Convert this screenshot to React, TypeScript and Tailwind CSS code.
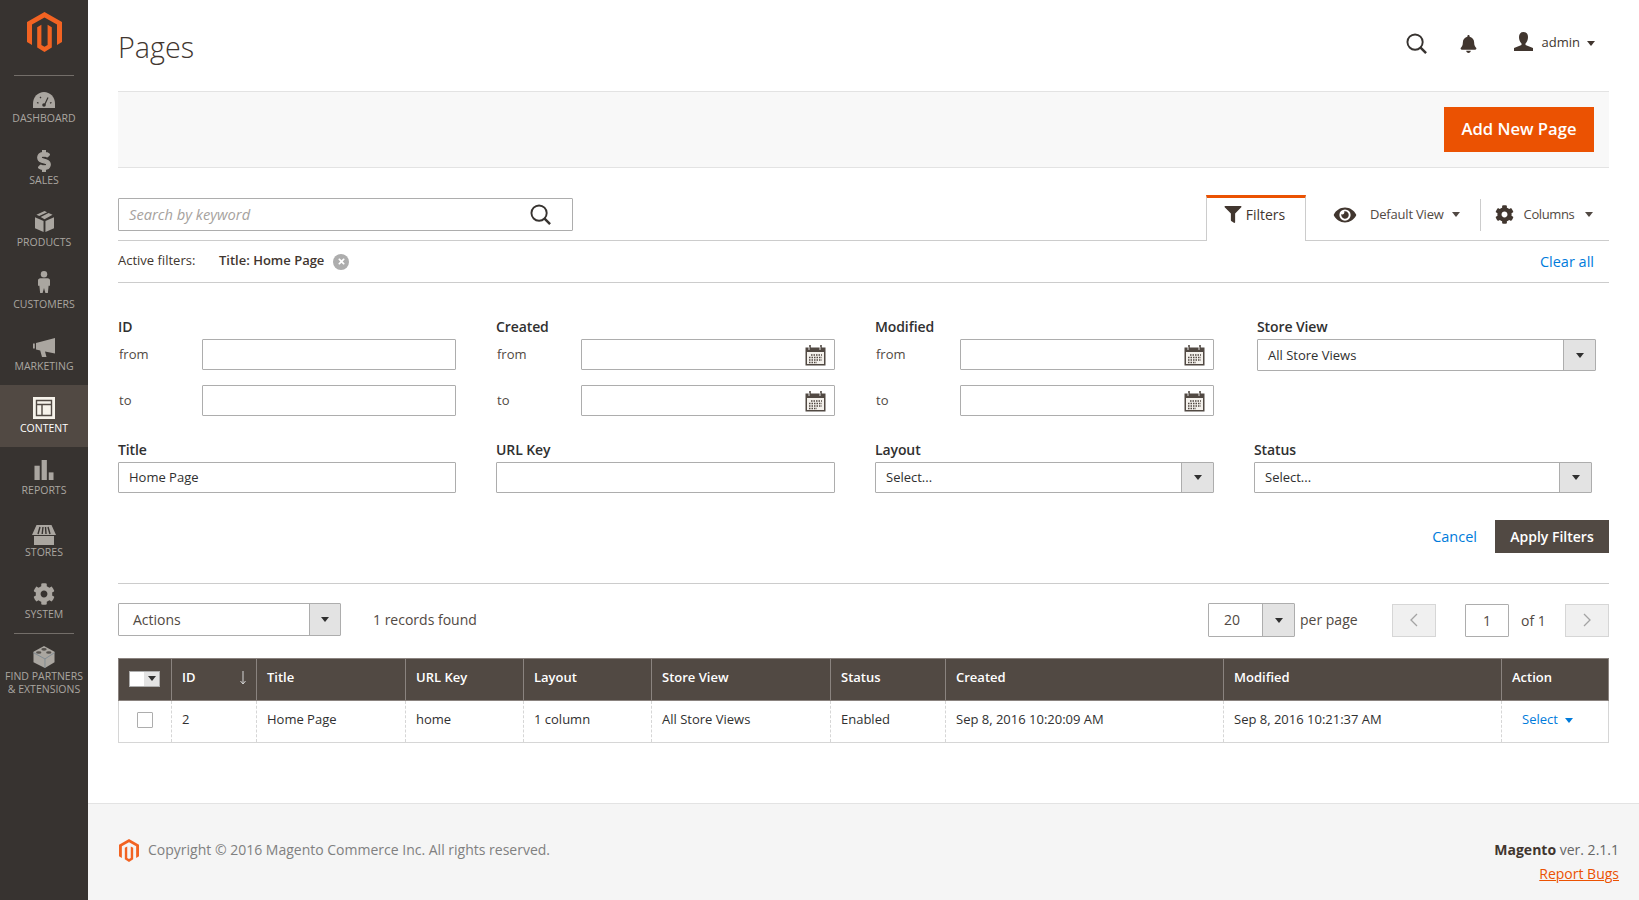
import { FaBell, FaCog, FaDollarSign, FaEye, FaFilter, FaTimes } from "react-icons/fa";
import type { ReactNode } from "react";

const font = { fontFamily: '"Open Sans", sans-serif' };

const MagentoLogo = ({ className }: { className: string }) => (
  <svg viewBox="0 0 35 40" className={className} fill="#f26322">
    <path d="M17.5 0 35 10v20l-5 3V12.6L17.5 5.5 5 12.6V33l-5-3V10Z" />
    <path d="M10.2 15.2 14.4 12.8V33l3.1 1.8L20.6 33V12.8l4.2 2.4v20.2L17.5 40l-7.3-4.6Z" />
  </svg>
);

const Caret = ({ className = "border-t-[#303030]" }: { className?: string }) => (
  <span className={`inline-block w-0 h-0 border-x-[4px] border-x-transparent border-t-[5px] ${className}`} />
);

const Lens = ({ className }: { className: string }) => (
  <svg viewBox="0 0 22 22" className={className} fill="none" stroke="#373330" strokeWidth="2">
    <circle cx="9.5" cy="9.5" r="8" />
    <path d="m15 15 6 6" strokeWidth="2.6" />
  </svg>
);

const CalendarIcon = () => (
  <svg viewBox="0 0 21 21" className="w-[21px] h-[21px] absolute right-[8px] top-[5px]">
    <rect x="0.5" y="2.5" width="20" height="18" fill="#514943" />
    <rect x="2" y="7" width="17" height="12" fill="#f4f1ec" />
    <path d="M5 0v5M16 0v5" stroke="#514943" strokeWidth="1.6" />
    <path d="M4 2v3M15 2v3" stroke="#fff" strokeWidth="0.8" />
    <path d="M6 10h11M4 12.5h13M4 15h13M4 17.5h8" stroke="#514943" strokeWidth="1.5" strokeDasharray="1.5 1" />
  </svg>
);

const navIcons: Record<string, ReactNode> = {
  DASHBOARD: (
    <svg viewBox="0 0 22 16" className="w-[22px] h-[16px] translate-y-[1px] fill-[#aaa6a0]">
      <path d="M0 16v-4.500C0 5 5 0 11 0s11 5 11 11.500V16Z" />
      <path d="M11.500 13 15 5.500M4 10.500l1.500.6M7 5l1 1.200M18.500 10.500l-1.500.6" stroke="#373330" strokeWidth="1.200" />
      <circle cx="11" cy="13" r="1.800" fill="#373330" />
    </svg>
  ),
  SALES: <FaDollarSign stroke="currentColor" strokeWidth={30} className="w-[14px] h-[22px] text-[#aaa6a0]" />,
  PRODUCTS: (
    <svg viewBox="0 0 20 22" className="w-[19px] h-[21px] -translate-y-[1px] fill-[#aaa6a0]">
      <path d="M0 6.500 9 10.500V22L0 18Z" />
      <path d="M20 6.500 11 10.500V22L20 18Z" />
      <path d="M10 0 12.800 1.300 4.500 5.300 1.500 4ZM14.300 2 18.500 4 10 8.500 6 6.200Z" />
    </svg>
  ),
  CUSTOMERS: (
    <svg viewBox="0 0 13 24" className="w-[12px] h-[24px] -translate-y-[3px] fill-[#aaa6a0]">
      <circle cx="6.500" cy="3.500" r="3.500" />
      <path d="M2.500 8h8c1.500 0 2.500 1 2.500 2.500V16h-1.500l-.8 8H8l-1.500-5.500L5 24H2.300l-.8-8H0v-5.500C0 9 1 8 2.500 8Z" />
    </svg>
  ),
  MARKETING: (
    <svg viewBox="0 0 22 19" className="w-[22px] h-[19px] translate-y-[1px] fill-[#aaa6a0]">
      <path d="M0 5.500h1.800v5H0ZM3 5 22 0v15.500L12 13.500 13.500 19H9L7.200 12.500 3 11.500Z" />
    </svg>
  ),
  CONTENT: (
    <svg viewBox="0 0 22 22" className="w-[22px] h-[22px] -translate-y-[1px]">
      <rect x="0" y="0" width="22" height="22" fill="#f7f3eb" />
      <path d="M3.500 3.500h15v15h-15ZM3.500 7.500h15M9 7.500v11" fill="none" stroke="#514943" strokeWidth="1.400" />
    </svg>
  ),
  REPORTS: (
    <svg viewBox="0 0 20 21" className="w-[20px] h-[20px] -translate-y-[1px] fill-[#aaa6a0]">
      <rect x="0" y="6" width="5.500" height="15" />
      <rect x="7.500" y="0" width="5.500" height="21" />
      <rect x="15" y="13" width="5" height="8" />
    </svg>
  ),
  STORES: (
    <svg viewBox="0 0 24 20" className="w-[24px] h-[20px] translate-y-[2px] fill-[#aaa6a0]">
      <path d="M4.500 0h15L24 10H0ZM2 11h20v9H2Z" />
      <path d="M8 2 6 9M11 2l-.8 7M13.500 2l.5 7M16 2l2 7" stroke="#373330" strokeWidth="1.400" />
    </svg>
  ),
  SYSTEM: <FaCog className="w-[22px] h-[22px] -translate-y-[1px] text-[#aaa6a0]" />,
  LEGO: (
    <svg viewBox="0 0 22 23" className="w-[22px] h-[22px] -translate-y-[1px] fill-[#aaa6a0]">
      <path d="M11 0 22 6v11l-10 6L0 17V6Z" />
      <path d="M0 7 12 13.500 22 7M12 13.500V23" fill="none" stroke="#7f8b93" strokeWidth="1" />
      <ellipse cx="11" cy="3.500" rx="2.800" ry="1.400" fill="#55514d" />
      <ellipse cx="5.500" cy="6.800" rx="2.800" ry="1.400" fill="#55514d" />
      <ellipse cx="16" cy="6.800" rx="2.800" ry="1.400" fill="#55514d" />
    </svg>
  ),
};

const navItems = ["DASHBOARD", "SALES", "PRODUCTS", "CUSTOMERS", "MARKETING", "CONTENT", "REPORTS", "STORES", "SYSTEM"];

const Sidebar = () => (
  <aside className="w-[88px] shrink-0 bg-[#373330]">
    <div className="h-[75px] pt-[12px] flex justify-center">
      <MagentoLogo className="w-[35px] h-[40px]" />
    </div>
    <div className="mx-[14px] h-px bg-[#736e69] -mb-px" />
    {navItems.map((item) => (
      <div
        key={item}
        className={`h-[62px] pt-[11px] flex flex-col items-center text-[10.5px] leading-[14px] ${
          item === "CONTENT" ? "bg-[#514943] text-white" : "text-[#aaa6a0]"
        }`}
      >
        <div className="h-[25px] flex items-center justify-center">{navIcons[item]}</div>
        <span>{item}</span>
      </div>
    ))}
    <div className="mx-[14px] h-px bg-[#736e69]" />
    <div className="pt-[12px] flex flex-col items-center text-[10.5px] leading-[13px] text-[#aaa6a0] text-center">
      <div className="h-[24px] flex items-center justify-center">{navIcons.LEGO}</div>
      <span>
        FIND PARTNERS
        <br />& EXTENSIONS
      </span>
    </div>
  </aside>
);

const Input = ({ value, calendar, className = "" }: { value?: string; calendar?: boolean; className?: string }) => (
  <div
    className={`relative h-[31px] border border-[#adadad] rounded-[1px] bg-white px-[10px] text-[13px] leading-[29px] text-[#303030] ${className}`}
  >
    {value}
    {calendar && <CalendarIcon />}
  </div>
);

const Select = ({ value, className = "" }: { value: string; className?: string }) => (
  <div className={`flex border border-[#adadad] rounded-[1px] bg-white text-[13px] text-[#303030] ${className}`}>
    <span className="flex-1 pl-[10px]">{value}</span>
    <span className="w-[32px] bg-[#e3e3e3] border-l border-[#adadad] flex items-center justify-center">
      <Caret />
    </span>
  </div>
);

const FieldLabel = ({ children }: { children: ReactNode }) => (
  <div className="text-[14px] font-semibold leading-[20px] text-[#303030] h-[22px] tracking-[-0.1px]">{children}</div>
);

const RangeField = ({ label, calendar, labelClass = "w-[84px]" }: { label: string; calendar?: boolean; labelClass?: string }) => (
  <div>
    <FieldLabel>{label}</FieldLabel>
    <div className="flex flex-col gap-[15px] text-[13px] text-[#514943]">
      {["from", "to"].map((p) => (
        <div key={p} className="flex items-center h-[31px]">
          <span className={`${labelClass} pl-px`}>{p}</span>
          <Input calendar={calendar} className="w-[254px]" />
        </div>
      ))}
    </div>
  </div>
);

const columns = [
  { name: "ID", w: 85 },
  { name: "Title", w: 149 },
  { name: "URL Key", w: 118 },
  { name: "Layout", w: 128 },
  { name: "Store View", w: 179 },
  { name: "Status", w: 115 },
  { name: "Created", w: 278 },
  { name: "Modified", w: 278 },
  { name: "Action", w: 107 },
];
const row = ["2", "Home Page", "home", "1 column", "All Store Views", "Enabled", "Sep 8, 2016 10:20:09 AM", "Sep 8, 2016 10:21:37 AM"];

const PagesTable = () => (
  <table className="w-[1490px] table-fixed border-collapse text-[13px]">
    <colgroup>
      <col className="w-[53px]" />
      {columns.map((c) => (
        <col key={c.name} style={{ width: c.w }} />
      ))}
    </colgroup>
    <thead>
      <tr className="h-[42px] bg-[#514943] text-white text-left">
        <th className="border border-[#8a837f] px-0 pb-[2px]">
          <div className="flex w-[31px] h-[16px] ml-[10px] border border-[#adadad] bg-white">
            <span className="flex-1" />
            <span className="w-[15px] bg-[#e3e3e3] flex items-center justify-center">
              <Caret />
            </span>
          </div>
        </th>
        {columns.map((c) => (
          <th key={c.name} className="relative border border-[#8a837f] px-[10px] pb-[4px] font-semibold">
            {c.name}
            {c.name === "ID" && (
              <svg viewBox="0 0 8 14" className="absolute right-[9px] top-[12px] w-[8px] h-[14px]" fill="none" stroke="#d6d6d6" strokeWidth="1">
                <path d="M4 0v12.500M1.500 10 4 13l2.500-3" />
              </svg>
            )}
          </th>
        ))}
      </tr>
    </thead>
    <tbody>
      <tr className="h-[42px] text-[#303030]">
        <td className="border-y border-l border-[#d6d6d6] pb-[4px]">
          <div className="w-[16px] h-[16px] mx-auto border border-[#adadad] rounded-[1px]" />
        </td>
        {row.map((cell) => (
          <td
            key={cell}
            className="border-y border-[#d6d6d6] border-l border-l-[#d6d6d6] border-dashed [border-top-style:solid] [border-bottom-style:solid] px-[10px] pb-[3px]"
          >
            {cell}
          </td>
        ))}
        <td className="border border-[#d6d6d6] [border-left-style:dashed] pl-[20px] pb-[3px] text-[#007bdb]">
          Select
          <Caret className="border-t-[#007bdb] ml-[7px] align-middle" />
        </td>
      </tr>
    </tbody>
  </table>
);

const Pager = ({ d }: { d: string }) => (
  <div className="w-[44px] h-[33px] bg-[#f0f0f0] border border-[#d6d6d6] flex items-center justify-center">
    <svg viewBox="0 0 10 14" className="w-[10px] h-[14px]" fill="none" stroke="#a3a3a3" strokeWidth="1.300">
      <path d={d} />
    </svg>
  </div>
);

export default function App() {
  return (
    <div className="flex w-[1639px] min-h-[900px] bg-white text-[#303030]" style={font}>
      <Sidebar />
      <main className="flex-1 flex flex-col min-w-0">
        <div className="px-[30px]">
          {/* Header */}
          <header className="h-[91px] flex items-start justify-between">
            <h1 className="mt-[25px] text-[28.7px] font-light leading-[44px] text-[#41362f]">Pages</h1>
            <div className="flex items-center pt-[33px] pr-[14px]">
              <Lens className="w-[21px] h-[21px]" />
              <FaBell className="w-[17px] h-[18px] ml-[33px] text-[#41362f]" />
              <svg viewBox="0 0 19 19" className="w-[19px] h-[19px] ml-[37px] -mt-[4px] fill-[#41362f]">
                <path d="M9.500 0C6.500 0 5 2 5 5s1 5 2.500 6.500V13L0 16v3h19v-3l-7.500-3v-1.500C13 10 14 8 14 5s-1.500-5-4.500-5Z" />
              </svg>
              <span className="ml-[9px] -mt-[2px] text-[13px] text-[#41362f]">admin</span>
              <Caret className="border-t-[#41362f] ml-[7px]" />
            </div>
          </header>

          {/* Action bar */}
          <div className="h-[77px] border-y border-[#e3e3e3] bg-[#f8f8f8] flex items-center justify-end pr-[15px]">
            <button className="w-[150px] h-[45px] bg-[#eb5202] text-white text-[16.6px] font-semibold">Add New Page</button>
          </div>

          {/* Search and view toolbar */}
          <div className="mt-[27px] h-[46px] flex items-start border-b border-[#cccccc]">
            <div className="mt-[3px] w-[455px] h-[33px] border border-[#adadad] rounded-[1px] flex items-center justify-between pl-[10px] pr-[21px]">
              <span className="text-[14.7px] italic text-[#a6a29e]">Search by keyword</span>
              <Lens className="w-[21px] h-[21px]" />
            </div>
            <div className="ml-[633px] w-[100px] h-[46px] border-x border-[#cccccc] border-t-[3px] border-t-[#eb5202] bg-white flex items-center justify-center gap-[4px] text-[14px] text-[#41362f] pb-[11px] pr-[3px]">
              <FaFilter className="w-[18px] h-[17px] text-[#41362f]" />
              Filters
            </div>
            <div className="flex items-center h-[33px] mt-[3px] text-[13px] text-[#514943]">
              <FaEye className="ml-[26px] w-[26px] h-[20px] text-[#41362f]" />
              <span className="ml-[12px] tracking-[-0.2px]">Default View</span>
              <Caret className="ml-[8px]" />
              <span className="ml-[20px] w-px h-[32px] bg-[#cccccc]" />
              <FaCog className="ml-[14px] w-[19px] h-[19px] text-[#41362f]" />
              <span className="ml-[10px] tracking-[-0.4px]">Columns</span>
              <Caret className="ml-[11px]" />
            </div>
          </div>

          {/* Active filters */}
          <div className="h-[42px] border-b border-[#cccccc] flex items-center text-[13px] text-[#41362f]">
            <span className="w-[101px] -mt-[2px]">Active filters:</span>
            <span className="font-semibold text-[13px] -mt-[2px]">Title: Home Page</span>
            <span className="ml-[9px] w-[16px] h-[16px] rounded-full bg-[#adadad] flex items-center justify-center">
              <FaTimes className="w-[9px] h-[9px] text-white" />
            </span>
            <a className="ml-auto mr-[15px] text-[14.5px] text-[#007bdb]">Clear all</a>
          </div>

          {/* Filter form */}
          <div className="pt-[34px] pb-[30px] border-b border-[#cccccc]">
            <div className="grid grid-cols-[378px_379px_379px_338px]">
              <RangeField label="ID" />
              <RangeField label="Created" calendar labelClass="w-[85px]" />
              <RangeField label="Modified" calendar labelClass="w-[85px]" />
              <div className="ml-[3px]">
                <FieldLabel>Store View</FieldLabel>
                <Select value="All Store Views" className="w-[339px] h-[32px] leading-[30px]" />
              </div>
            </div>
            <div className="mt-[24px] grid grid-cols-[378px_379px_379px_338px]">
              <div className="w-[338px]">
                <FieldLabel>Title</FieldLabel>
                <Input value="Home Page" />
              </div>
              <div className="w-[339px]">
                <FieldLabel>URL Key</FieldLabel>
                <Input />
              </div>
              <div className="w-[339px]">
                <FieldLabel>Layout</FieldLabel>
                <Select value="Select..." className="h-[31px] leading-[28px]" />
              </div>
              <div>
                <FieldLabel>Status</FieldLabel>
                <Select value="Select..." className="h-[31px] leading-[28px]" />
              </div>
            </div>
            <div className="mt-[27px] flex items-center justify-end">
              <a className="text-[14.5px] text-[#007bdb] mr-[18px]">Cancel</a>
              <button className="w-[114px] h-[33px] bg-[#514943] text-white text-[14px] font-semibold">Apply Filters</button>
            </div>
          </div>

          {/* Grid toolbar */}
          <div className="mt-[19px] h-[34px] flex items-start text-[14px] text-[#514943]">
            <div className="flex w-[223px] h-[33px] border border-[#adadad] rounded-[1px]">
              <span className="flex-1 pl-[14px] leading-[31px] text-[14px]">Actions</span>
              <span className="w-[31px] bg-[#e3e3e3] border-l border-[#adadad] flex items-center justify-center">
                <Caret />
              </span>
            </div>
            <span className="ml-[32px] leading-[34px]">1 records found</span>
            <div className="ml-auto flex items-center h-[34px]">
              <div className="flex w-[87px] h-[34px] border border-[#adadad] rounded-[1px]">
                <span className="flex-1 pl-[15px] leading-[32px]">20</span>
                <span className="w-[32px] bg-[#e3e3e3] border-l border-[#adadad] flex items-center justify-center">
                  <Caret />
                </span>
              </div>
              <span className="ml-[5px] w-[92px] -mt-[2px]">per page</span>
              <Pager d="M8 1 2 7l6 6" />
              <div className="ml-[29px] w-[44px] h-[33px] border border-[#adadad] rounded-[1px] text-center leading-[31px] text-[#514943]">1</div>
              <span className="ml-[12px] w-[44px]">of 1</span>
              <Pager d="m2 1 6 6-6 6" />
            </div>
          </div>

          <div className="mt-[21px]">
            <PagesTable />
          </div>
        </div>

        {/* Footer */}
        <footer className="mt-auto h-[97px] border-t border-[#e3e3e3] bg-[#f5f5f5] flex justify-between pl-[31px] pr-[20px]">
          <div className="flex items-start pt-[35px] text-[14px] text-[#808080]">
            <MagentoLogo className="w-[20px] h-[23px]" />
            <span className="ml-[9px] leading-[22px]">Copyright © 2016 Magento Commerce Inc. All rights reserved.</span>
          </div>
          <div className="pt-[35px] text-right text-[14px] leading-[22px] text-[#666666]">
            <div>
              <strong className="font-bold text-[#41362f]">Magento</strong> ver. 2.1.1
            </div>
            <a className="block mt-[2px] text-[#eb5202] underline">Report Bugs</a>
          </div>
        </footer>
      </main>
    </div>
  );
}
